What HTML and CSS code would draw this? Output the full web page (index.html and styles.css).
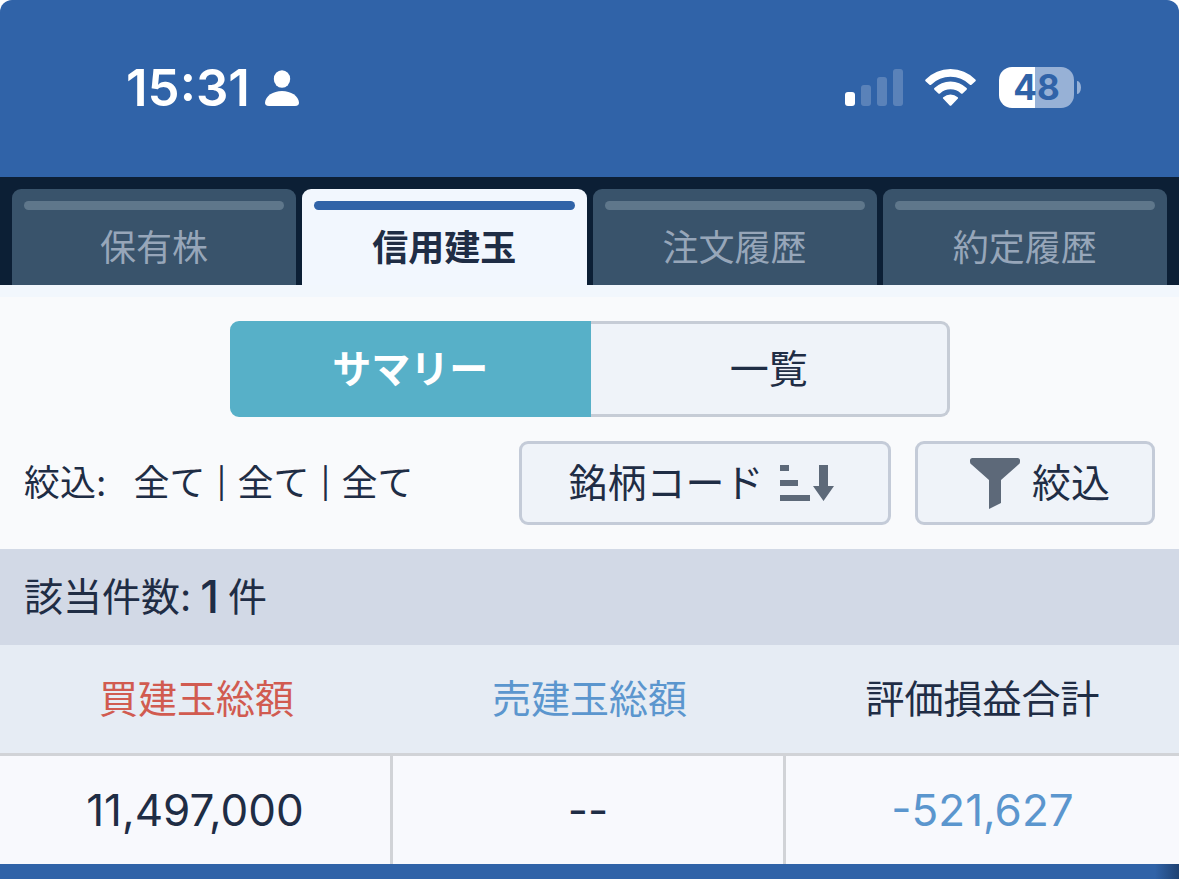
FILE: index.html
```html
<!DOCTYPE html>
<html lang="ja">
  <head>
    <meta charset="UTF-8" />
    <meta name="viewport" content="width=device-width, initial-scale=1.0" />
    <title>信用建玉 サマリー</title>
    <link rel="stylesheet" href="styles.css">
  </head>
  <body>
    <!-- ステータスバー -->
    <header class="status">
      <div class="status-left">
        <span class="time">15:31</span>
        <svg class="person" viewBox="0 0 34 36" aria-hidden="true">
          <ellipse cx="17" cy="9" rx="8.2" ry="8.8" />
          <path d="M4 36C1 36 0 34.5 0 32.500C0.500 26 8 21 17 21C26 21 33.500 26 34 32.500C34 34.500 33 36 30 36Z" />
        </svg>
      </div>
      <div class="status-right">
        <svg class="signal" viewBox="0 0 58 37" aria-hidden="true">
          <rect x="0" y="23" width="10" height="14" rx="3" />
          <g opacity="0.2">
            <rect x="16" y="16" width="10" height="21" rx="3" />
            <rect x="32" y="8" width="10" height="29" rx="3" />
            <rect x="48" y="0" width="10" height="37" rx="3" />
          </g>
        </svg>
        <svg class="wifi" viewBox="0 0 52 37" aria-hidden="true">
          <path d="M0.600 12.300Q-0.200 11.500 0.600 10.600Q11 0 25.500 0Q40 0 50.400 10.600Q51.200 11.500 50.400 12.300L46.500 15.800Q45.700 16.400 44.900 15.700Q36.500 7.800 25.500 7.800Q14.500 7.800 6.100 15.700Q5.300 16.400 4.500 15.800Z" />
          <path d="M9.400 20.700Q8.600 19.900 9.400 19.100Q16.200 12.400 25.500 12.400Q34.800 12.400 41.600 19.100Q42.400 19.900 41.600 20.700L37.600 24.500Q36.800 25.200 36 24.500Q31.500 20.300 25.500 20.300Q19.500 20.300 15 24.500Q14.200 25.200 13.400 24.500Z" />
          <path d="M18.300 29.700Q17.500 28.900 18.300 28.200Q21.400 25.500 25.500 25.500Q29.600 25.500 32.700 28.200Q33.500 28.900 32.700 29.700L26.300 36.400Q25.500 37.100 24.700 36.400Z" />
        </svg>
        <div class="battery"><span>48</span></div>
      </div>
    </header>

    <!-- 画面タブ -->
    <nav class="tabs">
      <a class="tab" href="#">保有株</a>
      <a class="tab active" href="#" aria-current="page">信用建玉</a>
      <a class="tab" href="#">注文履歴</a>
      <a class="tab" href="#">約定履歴</a>
    </nav>

    <main>
      <!-- 表示切替 -->
      <div class="segment">
        <button type="button" class="selected" aria-pressed="true">サマリー</button>
        <button type="button" aria-pressed="false">一覧</button>
      </div>

      <!-- 絞込条件と並び替え -->
      <div class="tools">
        <p class="condition">
          <span class="label">絞込:</span>
          <span>全て</span>
          <span class="sep">|</span>
          <span>全て</span>
          <span class="sep">|</span>
          <span>全て</span>
        </p>
        <button type="button" class="btn sort">
          銘柄コード
          <svg viewBox="0 0 54 37" aria-hidden="true">
            <path d="M0 0H9V6H0ZM0 15H18V21H0ZM0 30H30V36H0ZM39 0H48V21H54L43.500 36L33 21H39Z" />
          </svg>
        </button>
        <button type="button" class="btn filter">
          <svg viewBox="0 0 50 51" aria-hidden="true">
            <path d="M2.500 0H47.500Q50 0 50 2.500V4Q50 5.500 48.500 6.500L31 22V45L19 51V22L1.500 6.500Q0 5.500 0 4V2.500Q0 0 2.500 0Z" />
          </svg>
          絞込
        </button>
      </div>

      <p class="count">該当件数:<b>1</b>件</p>

      <table class="summary">
        <thead>
          <tr>
            <th class="buy" scope="col">買建玉総額</th>
            <th class="sell" scope="col">売建玉総額</th>
            <th scope="col">評価損益合計</th>
          </tr>
        </thead>
        <tbody>
          <tr>
            <td>11,497,000</td>
            <td>--</td>
            <td class="sell">-521,627</td>
          </tr>
        </tbody>
      </table>
    </main>

    <footer></footer>
  </body>
</html>
```
FILE: styles.css
```css
/* ===== リセット ===== */
* {
  margin: 0;
  padding: 0;
  box-sizing: border-box;
}
body {
  min-height: 100vh;
  display: flex;
  flex-direction: column;
  font-family: Inter, "Noto Sans CJK JP", sans-serif;
  font-size: 39px;
  line-height: 48px;
  color: #1f2d45;
  background: #fff;
}
button {
  font: inherit;
  color: inherit;
  cursor: pointer;
}

/* ===== ステータスバー ===== */
.status {
  display: flex;
  justify-content: space-between;
  align-items: center;
  height: 177px;
  padding: 0 105px 2px 126px;
  background: #3063a8;
  border-radius: 12px 12px 0 0;
}
.status svg {
  fill: #fff;
}
.status-left,
.status-right {
  display: flex;
  align-items: center;
}
.status-left {
  gap: 15px;
}
.status-right {
  gap: 22px;
}
.time {
  font-size: 51px;
  font-weight: 600;
  color: #fff;
}
.person {
  width: 34px;
  height: 36px;
}
.signal {
  width: 58px;
  height: 37px;
}
.wifi {
  width: 52px;
  height: 37px;
}
.battery {
  position: relative;
  width: 75px;
  height: 41px;
  border-radius: 13px;
  background: linear-gradient(90deg, #fff 48%, #97b1d6 48%);
  font-size: 35px;
  font-weight: 700;
  line-height: 41px;
  text-align: center;
  color: #3063a8;
}
.battery::after {
  content: "";
  position: absolute;
  left: 78px;
  top: 14px;
  width: 4px;
  height: 13px;
  border-radius: 0 4px 4px 0 / 0 7px 7px 0;
  background: #97b1d6;
}

/* ===== タブ ===== */
.tabs {
  display: flex;
  gap: 6px;
  padding: 12px 12px 0;
  background: #0c1f35;
}
.tab {
  flex: 1;
  padding: 12px 12px 13px;
  border-radius: 9px 9px 0 0;
  background: #39536b;
  font-size: 36px;
  text-align: center;
  text-decoration: none;
  color: #97a6b9;
}
.tab::before {
  content: "";
  display: block;
  height: 9px;
  margin-bottom: 14px;
  border-radius: 5px;
  background: #5f778b;
}
.tab.active {
  background: #f2f7fe;
  font-weight: 700;
  color: #1f2d45;
}
.tab.active::before {
  background: #3063a8;
}

/* ===== メイン ===== */
main {
  border-top: 12px solid #f2f7fd;
  background: #f9fafc;
}
.segment {
  display: flex;
  width: 720px;
  max-width: 100%;
  margin: 24px auto;
}
.segment button {
  flex: 1;
  height: 96px;
  border: 3px solid #c6ccd6;
  border-left: 0;
  border-radius: 0 9px 9px 0;
  background: #eff3f9;
}
.segment .selected {
  border: 3px solid #57b0c8;
  border-radius: 9px 0 0 9px;
  background: #57b0c8;
  font-weight: 700;
  color: #fff;
}
.tools {
  display: flex;
  align-items: center;
  gap: 24px;
  padding: 0 24px 24px;
}
.condition {
  flex: 1;
  display: flex;
  gap: 11px;
  font-size: 36px;
  white-space: nowrap;
}
.condition .label {
  margin-right: 16px;
}
.condition .sep {
  font-size: 30px;
}
.btn {
  display: flex;
  justify-content: center;
  align-items: center;
  height: 84px;
  border: 3px solid #c4cbd8;
  border-radius: 9px;
  background: #eff3f9;
}
.btn svg {
  fill: #5d6979;
}
.sort {
  width: 372px;
  gap: 16px;
  padding-right: 8px;
}
.sort svg {
  width: 54px;
  height: 37px;
}
.filter {
  width: 240px;
  gap: 12px;
  padding-left: 10px;
}
.filter svg {
  width: 50px;
  height: 51px;
}
.count {
  display: flex;
  align-items: center;
  gap: 9px;
  height: 96px;
  padding: 0 24px;
  background: #d2d9e6;
}
.count b {
  font-size: 45px;
  font-weight: 500;
}

/* ===== 集計表 ===== */
.summary {
  width: 100%;
  table-layout: fixed;
  border-spacing: 0;
  text-align: center;
}
.summary th {
  height: 111px;
  border-bottom: 3px solid #d1d3d7;
  background: #e6ecf4;
  font-weight: 400;
}
.summary td {
  height: 108px;
  border-right: 3px solid #d1d3d7;
  background: #f8f9fd;
  font-size: 44px;
}
.summary td:last-child {
  border-right: 0;
}
.summary .buy {
  color: #d15b50;
}
.summary .sell {
  color: #5b96ce;
}

/* ===== フッター ===== */
footer {
  flex: 1;
  min-height: 15px;
  background: linear-gradient(270deg, #1f4272, #3063a8 24px);
}
```
